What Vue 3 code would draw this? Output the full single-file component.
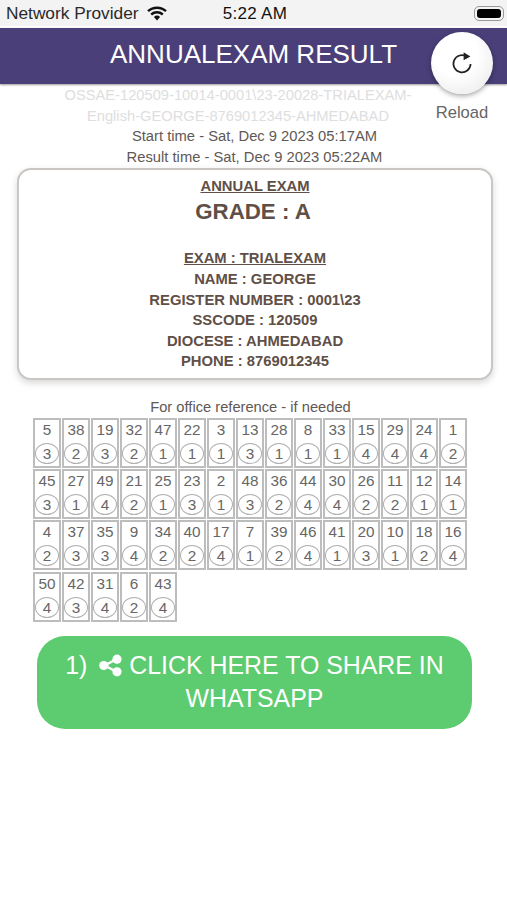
<template>
  <div class="page">
    <div class="status-bar">
      <div class="status-left">
        <span>Network Provider</span>
        <svg class="wifi" viewBox="0 0 20 15" width="20" height="15">
          <path d="M10 14.5 6.9 11a4.6 4.6 0 0 1 6.2 0Z" fill="#111" />
          <path d="M1 5.2a13.4 13.4 0 0 1 18 0" fill="none" stroke="#111" stroke-width="2.4" />
          <path d="M4.2 8.5a8.8 8.8 0 0 1 11.6 0" fill="none" stroke="#111" stroke-width="2.4" />
        </svg>
      </div>
      <span class="status-time">5:22 AM</span>
      <div class="status-right">
        <div class="battery"><div class="battery-fill"></div></div>
      </div>
    </div>

    <header class="top-bar">
      <h1 class="title">ANNUALEXAM RESULT</h1>
    </header>

    <div class="reload">
      <button class="reload-btn">
        <svg viewBox="0 0 24 24" width="24" height="24">
          <path d="M16.8 5.6A8.6 8.6 0 1 0 20.6 13" fill="none" stroke="#222" stroke-width="1.7" />
          <path d="M13.6 1.2 20.4 5.4 13.6 9.2Z" fill="#222" />
        </svg>
      </button>
      <span class="reload-label">Reload</span>
    </div>

    <div class="exam-id">OSSAE-120509-10014-0001\23-20028-TRIALEXAM-English-GEORGE-8769012345-AHMEDABAD</div>
    <div class="time-line">Start time - Sat, Dec 9 2023 05:17AM</div>
    <div class="time-line">Result time - Sat, Dec 9 2023 05:22AM</div>

    <section class="result-card">
      <div class="line underline">ANNUAL EXAM</div>
      <div class="grade">GRADE : A</div>
      <div class="line underline exam-name">EXAM : TRIALEXAM</div>
      <div v-for="row in details" :key="row" class="line">{{ row }}</div>
    </section>

    <div class="office-note">For office reference - if needed</div>
    <div class="answer-grid">
      <div v-for="item in answers" :key="item[0]" class="answer-cell">
        <span class="question">{{ item[0] }}</span>
        <span class="choice">{{ item[1] }}</span>
      </div>
    </div>

    <button class="share-btn">
      <span class="share-num">1)</span>
      <svg class="share-icon" viewBox="0 0 24 24" width="23" height="23">
        <path d="M18 5.5 6 12l12 6.5" fill="none" stroke="#fff" stroke-width="2.6" />
        <circle cx="18.8" cy="5.4" r="4.8" fill="#fff" />
        <circle cx="5" cy="12" r="4.8" fill="#fff" />
        <circle cx="18.8" cy="18.6" r="4.8" fill="#fff" />
      </svg>
      CLICK HERE TO SHARE IN WHATSAPP
    </button>
  </div>
</template>

<script setup>
const details = [
  'NAME : GEORGE',
  'REGISTER NUMBER : 0001\\23',
  'SSCODE : 120509',
  'DIOCESE : AHMEDABAD',
  'PHONE : 8769012345'
]

const answers = [
  [5, 3], [38, 2], [19, 3], [32, 2], [47, 1], [22, 1], [3, 1], [13, 3], [28, 1], [8, 1], [33, 1], [15, 4], [29, 4], [24, 4], [1, 2],
  [45, 3], [27, 1], [49, 4], [21, 2], [25, 1], [23, 3], [2, 1], [48, 3], [36, 2], [44, 4], [30, 4], [26, 2], [11, 2], [12, 1], [14, 1],
  [4, 2], [37, 3], [35, 3], [9, 4], [34, 2], [40, 2], [17, 4], [7, 1], [39, 2], [46, 4], [41, 1], [20, 3], [10, 1], [18, 2], [16, 4],
  [50, 4], [42, 3], [31, 4], [6, 2], [43, 4]
]
</script>

<style scoped>
.page {
  position: relative;
  width: 507px;
  height: 900px;
  overflow: hidden;
  background: #fff;
  font-family: "Liberation Sans", Arial, sans-serif;
  color: #5f4f47;
}

/* status bar */
.status-bar {
  display: grid;
  grid-template-columns: 1fr auto 1fr;
  align-items: center;
  height: 27px;
  padding: 1px 3px 0 6px;
  box-sizing: border-box;
  background: #f3f3f3;
  border-bottom: 1px solid #fff;
  color: #2a2a2a;
  font-size: 17.3px;
}

.status-left {
  display: flex;
  align-items: center;
  gap: 8px;
}

.status-time {
  font-size: 17px;
  font-weight: 500;
  color: #111;
  letter-spacing: 0.3px;
}

.status-right {
  display: flex;
  justify-content: flex-end;
}

.battery {
  width: 30px;
  height: 15px;
  padding: 2px;
  box-sizing: border-box;
  border: 1px solid #999;
  border-radius: 5px;
}

.battery-fill {
  height: 100%;
  background: #000;
  border-radius: 3px;
}

/* header */
.top-bar {
  height: 56px;
  margin-top: 1px;
  background: #4a3f78;
  box-shadow: 0 1px 2px rgba(0, 0, 0, 0.4);
}

.title {
  margin: 0;
  padding-top: 11px;
  text-align: center;
  font-size: 26px;
  line-height: 30px;
  font-weight: 400;
  color: #fff;
}

.reload {
  position: absolute;
  top: 32px;
  left: 431px;
  width: 62px;
  display: flex;
  flex-direction: column;
  align-items: center;
}

.reload-btn {
  display: flex;
  align-items: center;
  justify-content: center;
  width: 62px;
  height: 62px;
  padding: 0;
  border: none;
  border-radius: 50%;
  background: radial-gradient(circle at 40% 35%, #fff 40%, #e6e6e6 100%);
  box-shadow: 0 2px 5px rgba(0, 0, 0, 0.35);
}

.reload-label {
  margin-top: 9px;
  font-size: 16.6px;
  line-height: 20px;
  color: #666;
}

/* intro text */
.exam-id {
  width: 360px;
  margin: 1px 0 0 58px;
  text-align: center;
  font-size: 14.7px;
  line-height: 20.7px;
  color: #dedede;
}

.time-line {
  padding-left: 2px;
  text-align: center;
  font-size: 14.75px;
  line-height: 20.7px;
  color: #5f5855;
}

/* result card */
.result-card {
  width: 476px;
  height: 212px;
  margin: 0 0 0 17px;
  padding: 6px 0 0;
  box-sizing: border-box;
  border: 2px solid #c9c6c3;
  border-radius: 14px;
  background: #fff;
  box-shadow: 0 3px 7px rgba(0, 0, 0, 0.16);
  text-align: center;
}

.line {
  font-size: 14.8px;
  line-height: 20.6px;
  font-weight: 700;
}

.underline {
  text-decoration: underline;
}

.grade {
  padding-right: 4px;
  font-size: 22.3px;
  line-height: 32px;
  font-weight: 700;
}

.exam-name {
  margin-top: 20px;
}

/* answers */
.office-note {
  margin-top: 18px;
  padding-right: 6px;
  text-align: center;
  font-size: 14.7px;
  line-height: 18px;
  color: #5f5855;
}

.answer-grid {
  display: flex;
  flex-wrap: wrap;
  align-content: flex-start;
  gap: 1.3px 1px;
  width: 436px;
  height: 204px;
  margin: 2px 0 0 33px;
}

.answer-cell {
  width: 28px;
  height: 50px;
  box-sizing: border-box;
  border: 2px solid #bdbdbd;
  display: flex;
  flex-direction: column;
  align-items: center;
  font-size: 15.3px;
  color: #666;
}

.question {
  line-height: 20px;
}

.choice {
  flex: none;
  width: 24px;
  height: 21px;
  margin-top: 3px;
  box-sizing: border-box;
  border: 1.5px solid #b0b0b0;
  border-radius: 50%;
  text-align: center;
  line-height: 19px;
}

/* share button */
.share-btn {
  display: block;
  width: 435px;
  height: 93px;
  margin: 14px 0 0 37px;
  padding: 0 26px;
  border: none;
  border-radius: 28px;
  background: #5dcb70;
  color: #fff;
  font-family: inherit;
  font-size: 24.9px;
  line-height: 33px;
  text-align: center;
}

.share-num {
  margin-right: 12px;
}

.share-icon {
  vertical-align: -3px;
}
</style>
